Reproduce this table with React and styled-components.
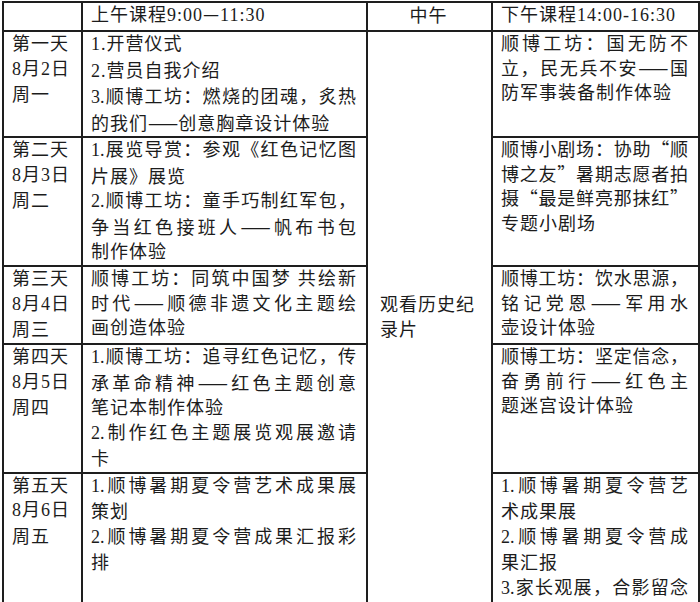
import React from 'react';
import styled, { createGlobalStyle } from 'styled-components';

const Global = createGlobalStyle`
  html, body { margin: 0; padding: 0; background: #fff; }
  body {
    font-family: "Noto Sans CJK SC", "Liberation Serif", sans-serif;
    color: #1c1c1c;
  }
`;

const Table = styled.table`
  border-collapse: collapse;
  table-layout: fixed;
  width: 696px;
  margin: 1px 0 0 2px;
  font-size: 18px;
  line-height: 24.5px;
  background: #fff;
`;

const Col = styled.col`
  width: ${(p) => p.$w}px;
`;

const Row = styled.tr`
  height: ${(p) => p.$h}px;
`;

const Cell = styled.td`
  border: 2px solid #1e1e1e;
  padding: ${(p) => p.$pad || '0 10px 0 8px'};
  vertical-align: ${(p) => p.$valign || 'top'};
  text-align: ${(p) => p.$align || 'left'};
  letter-spacing: 1px;
  white-space: nowrap;
`;

/* lifts the CJK text block so the glyphs sit where the reference has them */
const Body = styled.div`
  margin: -2px 0 2px;
`;

const Line = styled.div`
  text-align: ${(p) => (p.$j ? 'justify' : 'inherit')};
  text-align-last: ${(p) => (p.$j ? 'justify' : 'auto')};
  letter-spacing: ${(p) => (p.$j ? '0' : 'inherit')};
`;

const Latin = styled.span`
  font-family: "Liberation Serif", serif;
`;

const Dash = styled.span`
  display: inline-block;
  letter-spacing: 0;
`;

const j = (t) => ({ t, j: true });

const rows = [
  {
    h: 103,
    day: ['第一天', '8月2日', '周一'],
    am: ['1.开营仪式', '2.营员自我介绍', j('3.顺博工坊：燃烧的团魂，炙热'), '的我们——创意胸章设计体验'],
    pm: [j('顺博工坊：国无防不'), j('立，民无兵不安——国'), '防军事装备制作体验'],
  },
  {
    h: 129,
    day: ['第二天', '8月3日', '周二'],
    am: [j('1.展览导赏：参观《红色记忆图'), '片展》展览', j('2.顺博工坊：童手巧制红军包，'), j('争当红色接班人——帆布书包'), '制作体验'],
    pm: [j('顺博小剧场：协助“顺'), j('博之友”暑期志愿者拍'), j('摄“最是鲜亮那抹红”'), '专题小剧场'],
  },
  {
    h: 78,
    day: ['第三天', '8月4日', '周三'],
    am: [j('顺博工坊：同筑中国梦 共绘新'), j('时代——顺德非遗文化主题绘'), '画创造体验'],
    pm: [j('顺博工坊：饮水思源，'), j('铭记党恩——军用水'), '壶设计体验'],
  },
  {
    h: 128,
    day: ['第四天', '8月5日', '周四'],
    am: [j('1.顺博工坊：追寻红色记忆，传'), j('承革命精神——红色主题创意'), '笔记本制作体验', j('2.制作红色主题展览观展邀请'), '卡'],
    pm: [j('顺博工坊：坚定信念，'), j('奋勇前行——红色主'), '题迷宫设计体验'],
  },
  {
    h: 132,
    day: ['第五天', '8月6日', '周五'],
    am: [j('1.顺博暑期夏令营艺术成果展'), '策划', j('2.顺博暑期夏令营成果汇报彩'), '排'],
    pm: [j('1.顺博暑期夏令营艺'), '术成果展', j('2.顺博暑期夏令营成'), '果汇报', j('3.家长观展，合影留念')],
  },
];

// ASCII runs use the serif Latin face; a double dash is kept as one unit
const Text = ({ children }) =>
  String(children)
    .split(/([0-9.:\-]+|——)/)
    .filter(Boolean)
    .map((part, i) => {
      if (part === '——') return <Dash key={i}>——</Dash>;
      if (/^[0-9.:\-]+$/.test(part)) return <Latin key={i}>{part}</Latin>;
      return <React.Fragment key={i}>{part}</React.Fragment>;
    });

const Lines = ({ items }) => (
  <Body>
    {items.map((it, i) =>
      typeof it === 'string' ? (
        <Line key={i}>
          <Text>{it}</Text>
        </Line>
      ) : (
        <Line key={i} $j>
          <Text>{it.t}</Text>
        </Line>
      )
    )}
  </Body>
);

export default function App() {
  return (
    <>
      <Global />
      <Table>
        <colgroup>
          <Col $w={79} />
          <Col $w={285} />
          <Col $w={125} />
          <Col $w={207} />
        </colgroup>
        <tbody>
          <Row $h={29}>
            <Cell $valign="middle" />
            <Cell $valign="middle">
              <Lines items={['上午课程9:00—11:30']} />
            </Cell>
            <Cell $valign="middle" $align="center">
              <Lines items={['中午']} />
            </Cell>
            <Cell $valign="middle">
              <Lines items={['下午课程14:00-16:30']} />
            </Cell>
          </Row>
          {rows.map((r, i) => (
            <Row key={i} $h={r.h}>
              <Cell>
                <Lines items={r.day} />
              </Cell>
              <Cell>
                <Lines items={r.am} />
              </Cell>
              {i === 0 && (
                <Cell rowSpan={5} $valign="middle" $pad="0 8px 0 12px">
                  <Lines items={['观看历史纪', '录片']} />
                </Cell>
              )}
              <Cell>
                <Lines items={r.pm} />
              </Cell>
            </Row>
          ))}
        </tbody>
      </Table>
    </>
  );
}
